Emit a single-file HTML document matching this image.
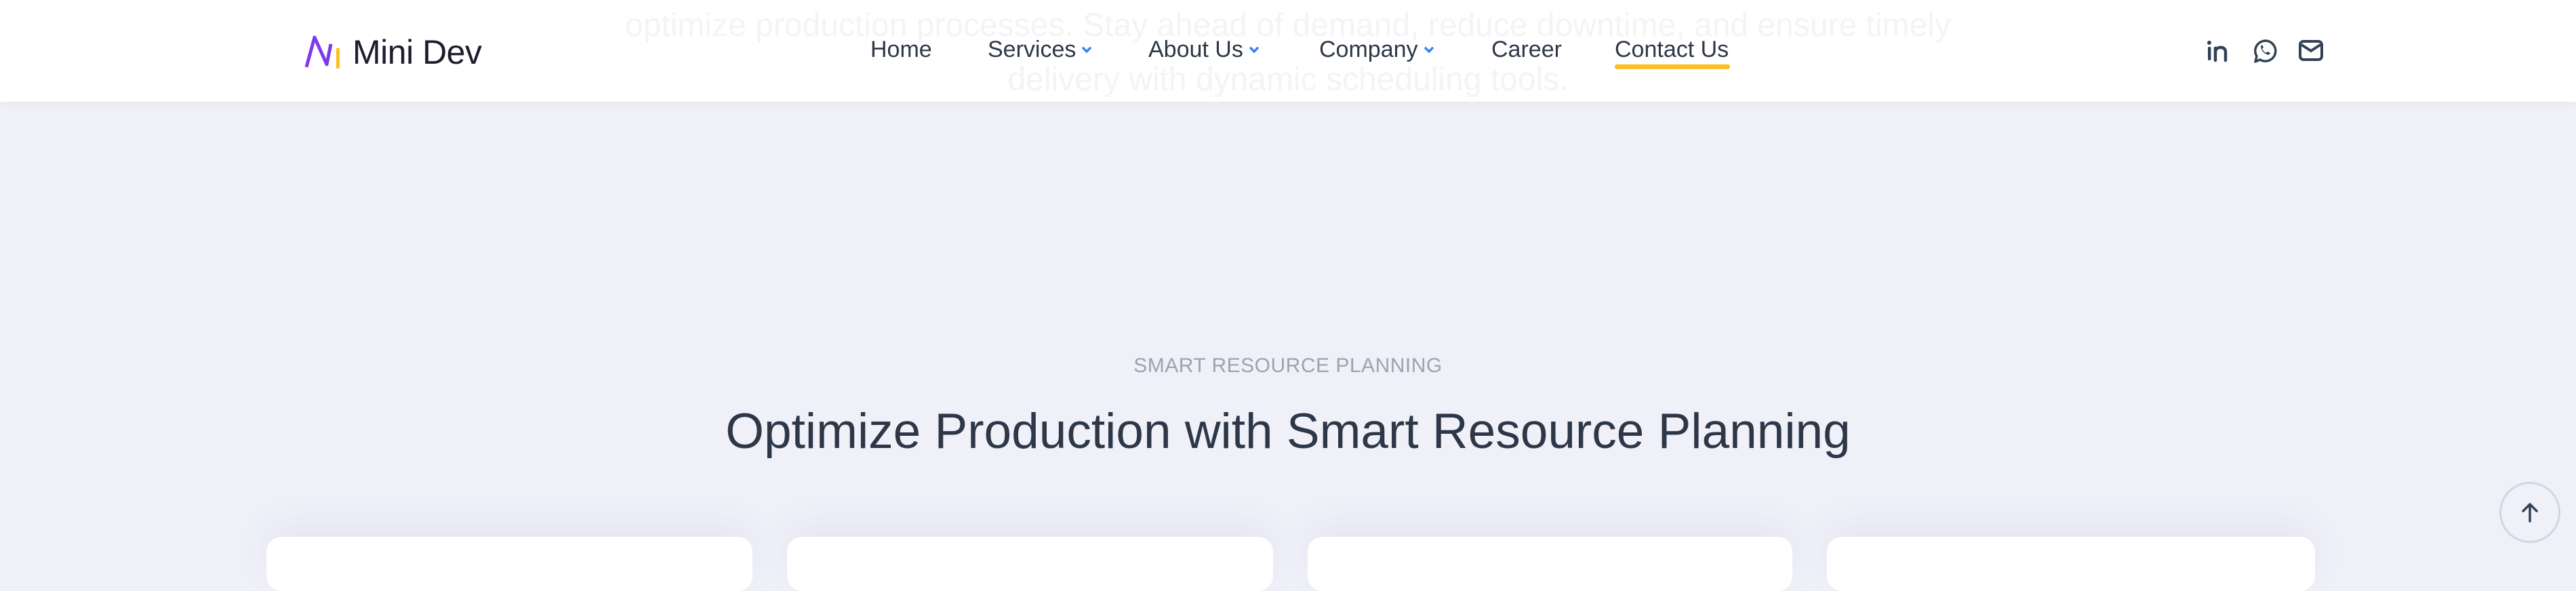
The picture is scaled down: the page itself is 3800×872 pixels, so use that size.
<!DOCTYPE html>
<html><head><meta charset="utf-8"><style>
*{margin:0;padding:0;box-sizing:border-box}
body{width:3800px;height:852px;overflow:hidden;background:#eff0f8;font-family:"Liberation Sans",sans-serif;position:relative}
.ghost{position:absolute;left:0;width:3800px;text-align:center;font-size:48px;color:#f4f4f6;z-index:2}
header{position:absolute;left:0;top:0;width:3800px;height:150px;background:rgba(255,255,255,0.96);box-shadow:0 4px 14px rgba(0,0,0,0.04);z-index:1}
.logo{position:absolute;left:448px;top:48px;display:flex;align-items:center;z-index:3}
.logo span{font-size:50px;color:#1e1b2e;margin-left:14px;letter-spacing:-0.5px}
nav a{position:absolute;top:54px;font-size:34px;color:#2d3748;text-decoration:none;z-index:3;white-space:nowrap}
.car{display:inline-block;margin-left:8px;vertical-align:4px}
.ul{position:absolute;left:2382px;top:95px;width:170px;height:7px;background:#fbbf24;border-radius:3px;z-index:3}
.ic{position:absolute;top:56px;z-index:3}
.label{position:absolute;top:523px;width:3800px;text-align:center;font-size:30px;color:#9ca3af;letter-spacing:0.5px}
h1{position:absolute;top:595px;width:3800px;text-align:center;font-size:73px;font-weight:normal;color:#2d3748}
.card{position:absolute;top:792px;height:80px;background:#fff;border-radius:22px;box-shadow:0 -20px 50px rgba(80,80,140,0.06)}
.top{position:absolute;left:3687px;top:711px;width:90px;height:90px;border-radius:50%;border:3px solid #d4d5e2;background:#eff0f8;display:flex;align-items:center;justify-content:center}
</style></head><body>
<div class="ghost" style="top:10px">optimize production processes. Stay ahead of demand, reduce downtime, and ensure timely</div>
<div class="ghost" style="top:90px">delivery with dynamic scheduling tools.</div>
<header></header>
<div class="logo"><svg width="58" height="52" viewBox="0 0 58 52"><path d="M4 48 L16 4 L34 44 L40 14" fill="none" stroke="#7c3aed" stroke-width="5" stroke-linejoin="round"/><rect x="48" y="20" width="5" height="30" fill="#fbbf24"/></svg><span>Mini Dev</span></div>
<nav>
<a style="left:1284px">Home</a>
<a style="left:1457px">Services<svg class="car" width="16" height="12" viewBox="0 0 16 12"><path d="M3 3l5 5 5-5" fill="none" stroke="#3b82f6" stroke-width="3.5" stroke-linecap="round"/></svg></a>
<a style="left:1694px">About Us<svg class="car" width="16" height="12" viewBox="0 0 16 12"><path d="M3 3l5 5 5-5" fill="none" stroke="#3b82f6" stroke-width="3.5" stroke-linecap="round"/></svg></a>
<a style="left:1946px">Company<svg class="car" width="16" height="12" viewBox="0 0 16 12"><path d="M3 3l5 5 5-5" fill="none" stroke="#3b82f6" stroke-width="3.5" stroke-linecap="round"/></svg></a>
<a style="left:2200px">Career</a>
<a style="left:2382px">Contact Us</a>
</nav>
<div class="ul"></div>
<svg class="ic" style="left:3254px" width="36" height="36" viewBox="0 0 36 36"><circle cx="5" cy="7" r="3" fill="#334155"/><rect x="3" y="13" width="4.5" height="20" rx="2" fill="#334155"/><path d="M14 33V15M14 21c0-5 4-7 8-7s7 2 7 7v12" fill="none" stroke="#334155" stroke-width="4.5" stroke-linecap="round"/></svg>
<svg class="ic" style="left:3322px" width="38" height="38" viewBox="0 0 38 38"><path d="M5 35l2-8a15 15 0 1 1 5 5z" fill="none" stroke="#334155" stroke-width="3.5" stroke-linejoin="round"/><path d="M13 12c0 6 5 12 12 13l2-3-4-2-2 2c-3-1-5-4-6-6l2-2-2-4z" fill="#334155"/></svg>
<svg class="ic" style="left:3391px" width="36" height="36" viewBox="0 0 36 36"><rect x="2" y="5" width="32" height="27" rx="5" fill="none" stroke="#334155" stroke-width="4"/><path d="M4 10l14 9 14-9" fill="none" stroke="#334155" stroke-width="4"/></svg>
<div class="label">SMART RESOURCE PLANNING</div>
<h1>Optimize Production with Smart Resource Planning</h1>
<div class="card" style="left:393px;width:717px"></div>
<div class="card" style="left:1161px;width:717px"></div>
<div class="card" style="left:1929px;width:715px"></div>
<div class="card" style="left:2695px;width:720px"></div>
<div class="top"><svg width="30" height="34" viewBox="0 0 30 34"><path d="M15 30V5M5 15L15 5l10 10" fill="none" stroke="#334155" stroke-width="3.5" stroke-linecap="round" stroke-linejoin="round"/></svg></div>
</body></html>
